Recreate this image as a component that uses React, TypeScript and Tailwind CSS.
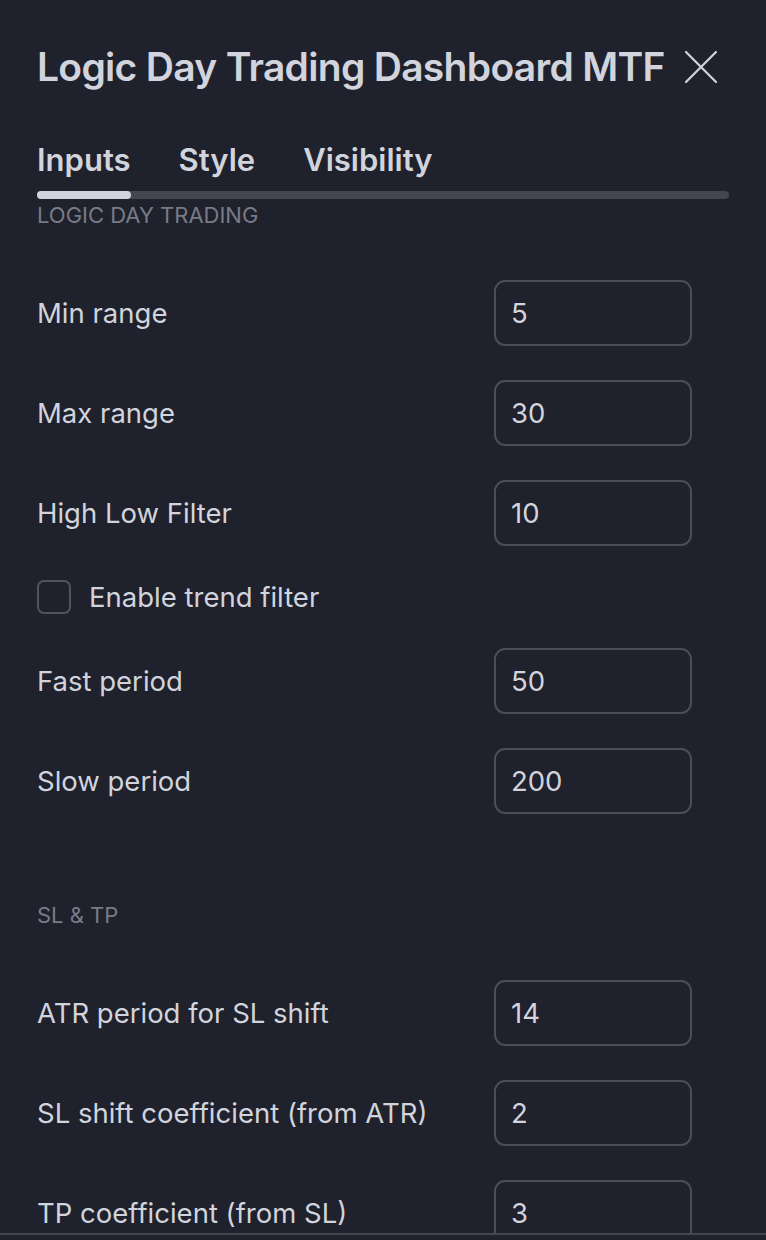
import React from "react";

type Row =
  | { kind: "number"; label: string; value: string }
  | { kind: "check"; label: string; checked: boolean };

const sections: { title: string; rows: Row[] }[] = [
  {
    title: "Logic Day Trading",
    rows: [
      { kind: "number", label: "Min range", value: "5" },
      { kind: "number", label: "Max range", value: "30" },
      { kind: "number", label: "High Low Filter", value: "10" },
      { kind: "check", label: "Enable trend filter", checked: false },
      { kind: "number", label: "Fast period", value: "50" },
      { kind: "number", label: "Slow period", value: "200" },
    ],
  },
  {
    title: "SL & TP",
    rows: [
      { kind: "number", label: "ATR period for SL shift", value: "14" },
      { kind: "number", label: "SL shift coefficient (from ATR)", value: "2" },
      { kind: "number", label: "TP coefficient (from SL)", value: "3" },
    ],
  },
];

function CloseIcon() {
  return (
    <svg width="34" height="34" viewBox="0 0 34 34" fill="none" className="shrink-0 text-[#d1d4dc]">
      <path d="M2 2L32 32M32 2L2 32" stroke="currentColor" strokeWidth="2.2" strokeLinecap="round" />
    </svg>
  );
}

function FieldRow({ row }: { row: Row }) {
  if (row.kind === "check") {
    return (
      <label className="flex h-[34px] items-center gap-[18px]">
        <span className="h-[34px] w-[34px] shrink-0 rounded-[7px] border-2 border-[#50535e]" />
        <span className="text-[27.5px] leading-[34px] text-[#d1d4dc]">{row.label}</span>
      </label>
    );
  }
  return (
    <div className="flex h-[66px] items-center justify-between">
      <span className="text-[27.5px] leading-[34px] whitespace-nowrap text-[#d1d4dc]">{row.label}</span>
      <div className="flex h-[66px] w-[198px] shrink-0 items-center rounded-[11px] border-2 border-[#4b4e58] px-[15px] text-[27.5px] leading-[34px] text-[#d1d4dc]">
        {row.value}
      </div>
    </div>
  );
}

export default function App() {
  return (
    <div
      className="h-[1240px] w-full overflow-hidden bg-[#1f212c]"
      style={{ fontFamily: "Inter, 'Noto Sans', 'Liberation Sans', sans-serif" }}
    >
      <header className="px-[37px] pt-[43px]">
        <div className="flex items-center gap-[19px]">
          <h1 className="text-[39px] leading-[48px] font-semibold tracking-[-0.7px] whitespace-nowrap text-[#d1d4dc]">
            Logic Day Trading Dashboard MTF
          </h1>
          <CloseIcon />
        </div>

        <nav className="mt-[49px] flex gap-[48px]">
          <span className="text-[31px] leading-[40px] font-semibold text-[#d1d4dc]">Inputs</span>
          <span className="text-[31px] leading-[40px] font-semibold text-[#d1d4dc]">Style</span>
          <span className="text-[31px] leading-[40px] font-semibold text-[#d1d4dc]">Visibility</span>
        </nav>
        <div className="mt-[11px] h-[8px] w-full rounded-full bg-[#434651]">
          <div className="h-[8px] w-[94px] rounded-full bg-[#d1d4dc]" />
        </div>
      </header>

      <main className="h-[1036px] overflow-hidden border-b-2 border-[#434651] px-[37px]">
        {sections.map((section, i) => (
          <section key={section.title} className={i === 0 ? "mt-[4px]" : "mt-[89px]"}>
            <h2 className="text-[22px] leading-[24px] text-[#787b86] uppercase">{section.title}</h2>
            <div className="mt-[53px] flex flex-col gap-[34px] pr-[37px]">
              {section.rows.map((row) => (
                <FieldRow key={row.label} row={row} />
              ))}
            </div>
          </section>
        ))}
      </main>

      <footer className="h-[80px]" />
    </div>
  );
}
